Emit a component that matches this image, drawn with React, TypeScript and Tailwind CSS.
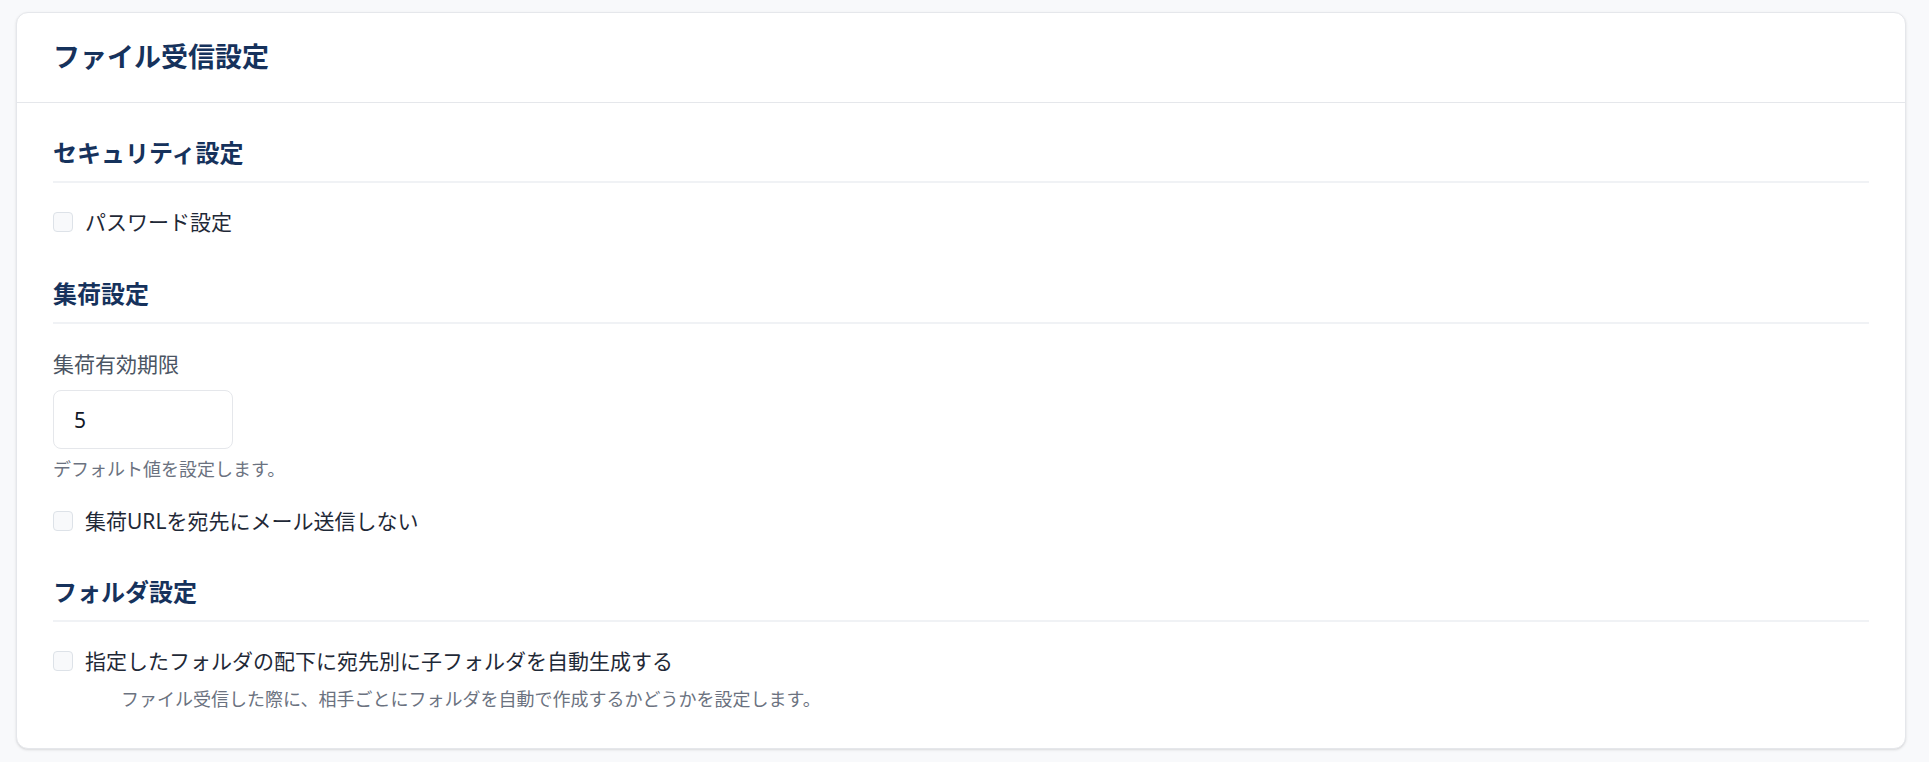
import { type ReactNode } from 'react'

const FONT = { fontFamily: '"Noto Sans", "Noto Sans CJK JP", sans-serif' }

function SectionTitle({ children }: { children: ReactNode }) {
  return (
    <h3 className="text-[24px] leading-[32px] font-bold text-[#16325c] pb-3 border-b-2 border-[#f0f2f5]">
      {children}
    </h3>
  )
}

function Check({ label }: { label: string }) {
  return (
    <label className="flex items-center gap-3 h-[30px]">
      <span className="w-5 h-5 shrink-0 rounded-[4px] border border-[#dde2e8] bg-[#f8f9fb]" />
      <span className="text-[21px] leading-[30px] text-[#1f2937]">{label}</span>
    </label>
  )
}

export default function App() {
  return (
    <div className="min-h-screen bg-[#f8f9fb] pt-3 pl-4" style={FONT}>
      <div className="w-[1890px] bg-white rounded-xl border border-[#e5e7eb] shadow-sm">
        {/* header */}
        <div className="h-[90px] px-9 flex items-center border-b border-[#e5e7eb]">
          <h2 className="text-[27px] font-bold text-[#16325c]">ファイル受信設定</h2>
        </div>

        <div className="px-9 pt-[34px] pb-[37px]">
          {/* security */}
          <SectionTitle>セキュリティ設定</SectionTitle>
          <div className="mt-6">
            <Check label="パスワード設定" />
          </div>

          {/* pickup */}
          <div className="mt-[41px]">
            <SectionTitle>集荷設定</SectionTitle>
          </div>
          <div className="mt-[25px] text-[21px] leading-[30px] text-[#4b5563]">集荷有効期限</div>
          <input
            readOnly
            value="5"
            className="mt-[11px] block w-[180px] h-[59px] px-5 rounded-lg border border-[#e5e7eb] text-[21px] text-[#111827] outline-none"
          />
          <div className="mt-2 text-[18px] leading-[24px] text-[#6b7280]">デフォルト値を設定します。</div>
          <div className="mt-[25px]">
            <Check label="集荷URLを宛先にメール送信しない" />
          </div>

          {/* folder */}
          <div className="mt-10">
            <SectionTitle>フォルダ設定</SectionTitle>
          </div>
          <div className="mt-6">
            <Check label="指定したフォルダの配下に宛先別に子フォルダを自動生成する" />
          </div>
          <div className="mt-[11px] pl-[68px] text-[18px] leading-[24px] text-[#6b7280]">
            ファイル受信した際に、相手ごとにフォルダを自動で作成するかどうかを設定します。
          </div>
        </div>
      </div>
    </div>
  )
}
